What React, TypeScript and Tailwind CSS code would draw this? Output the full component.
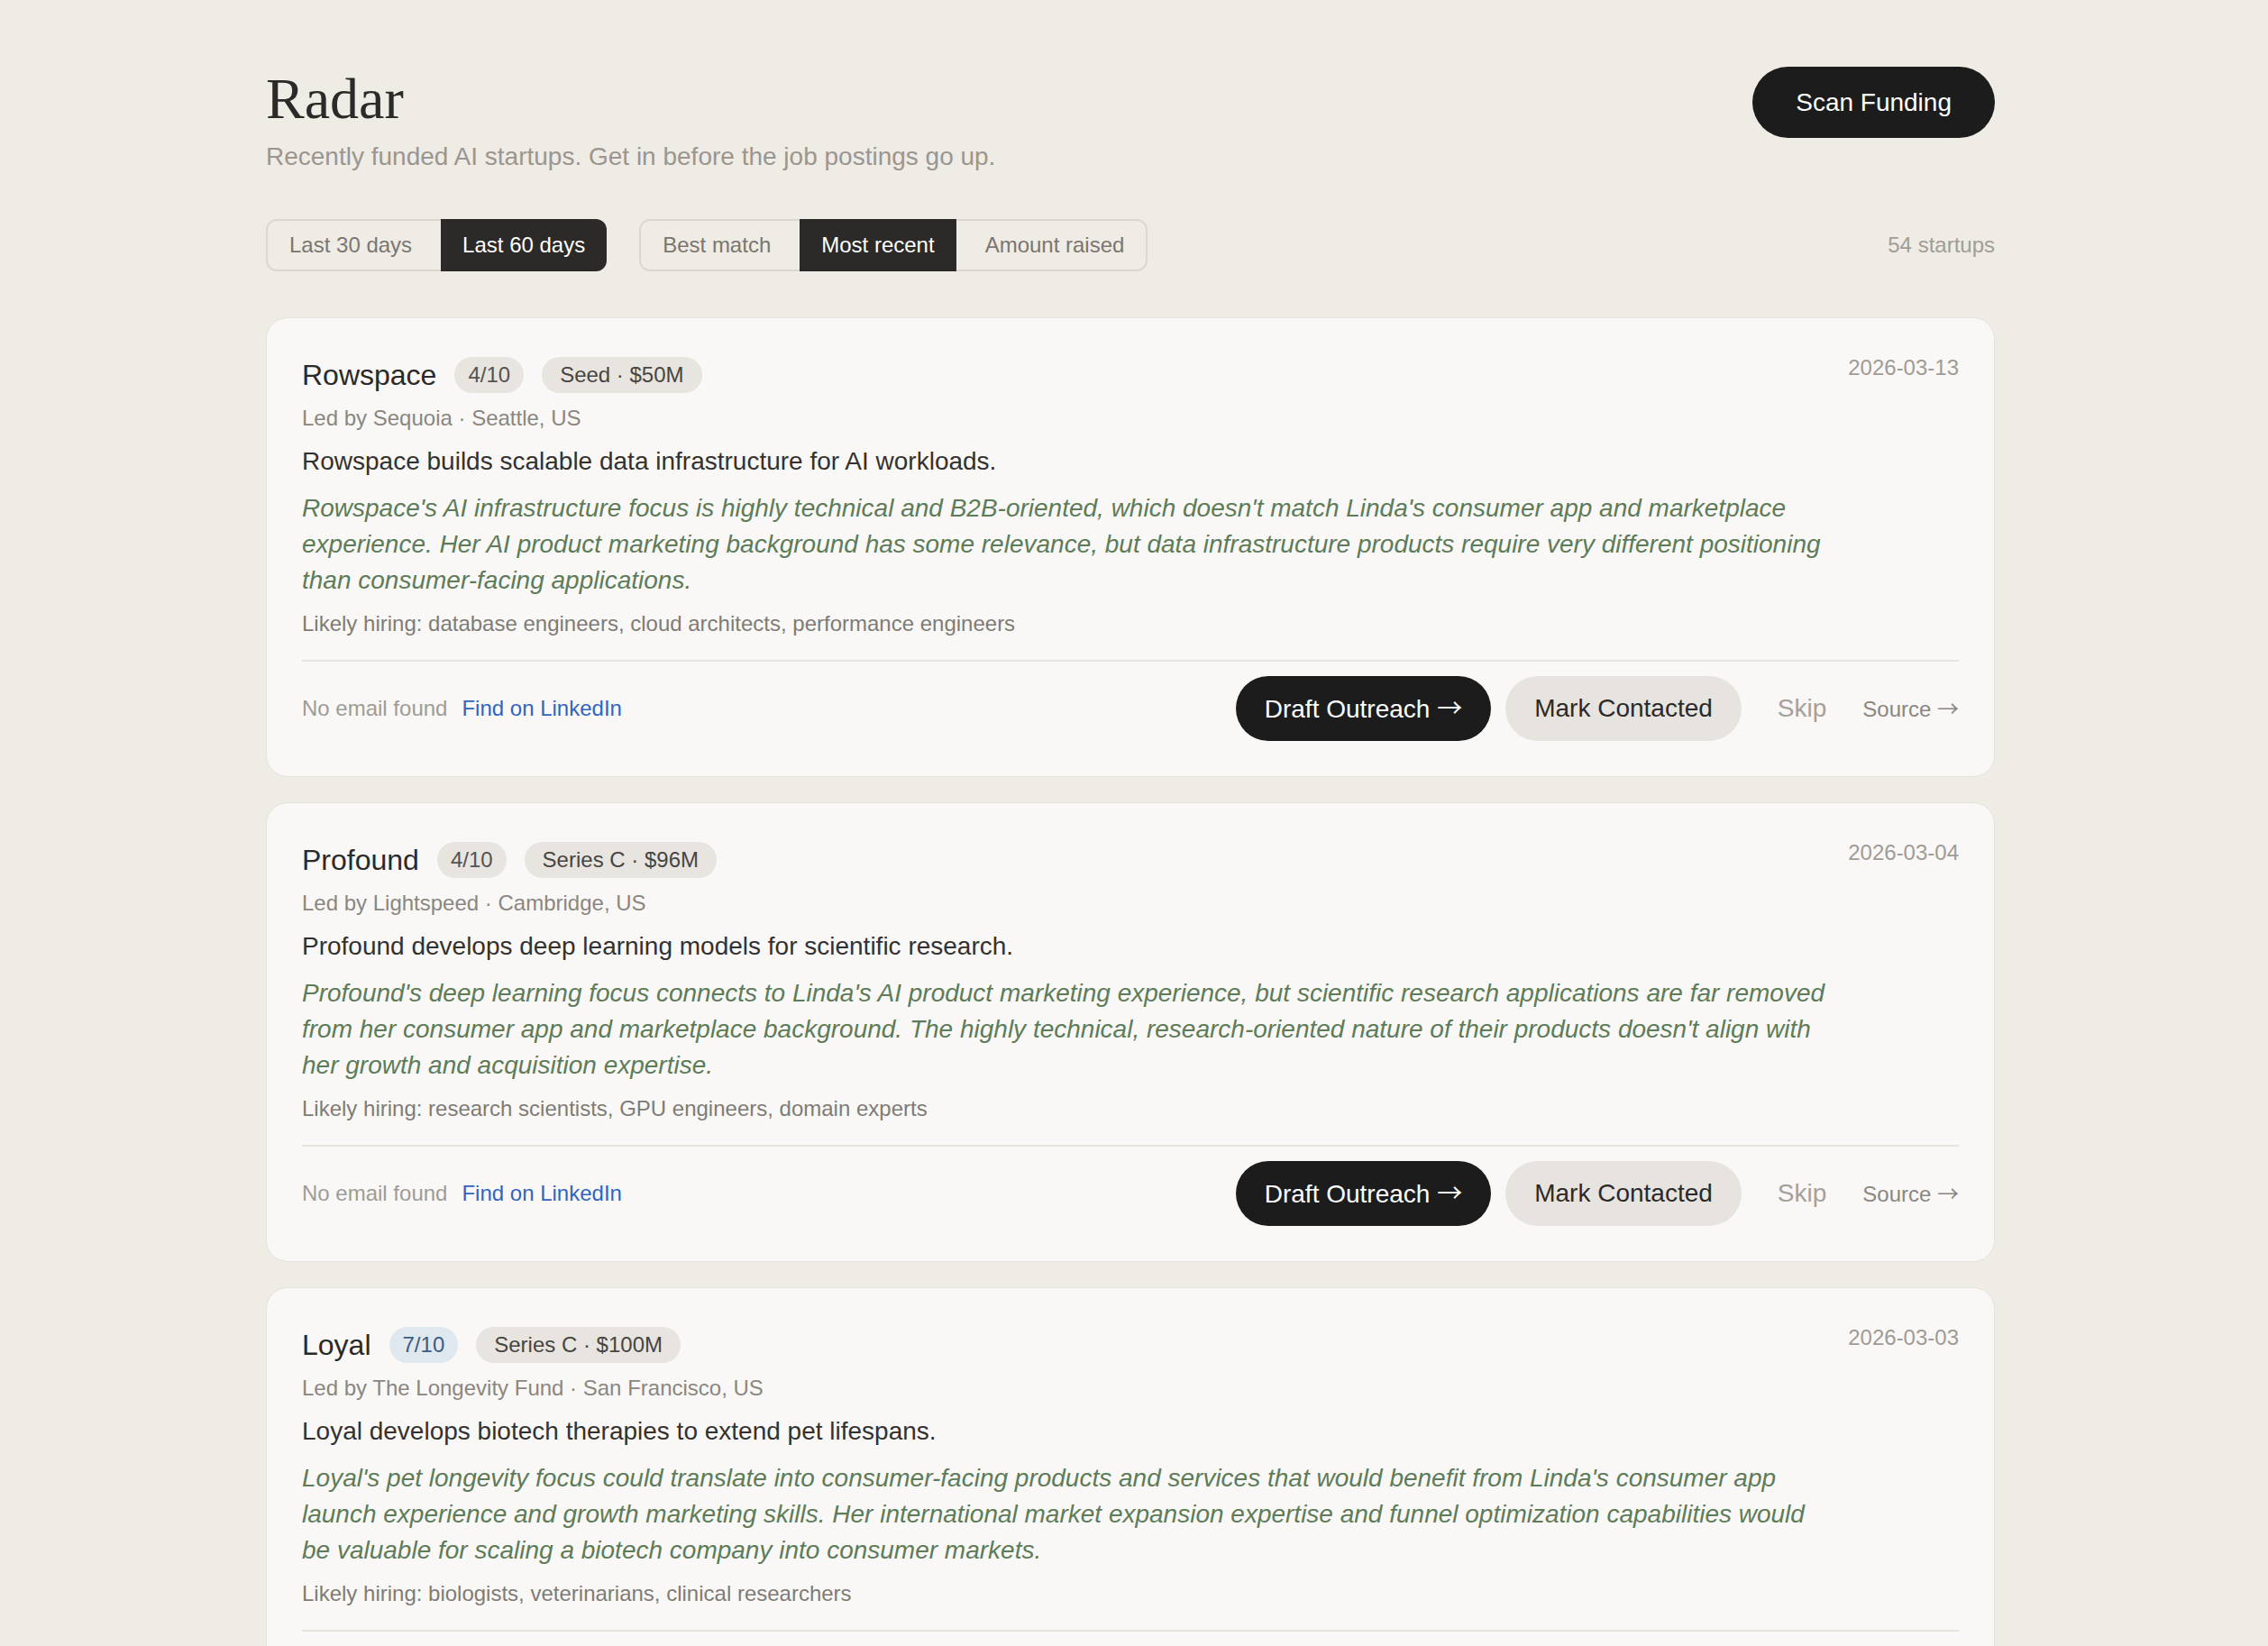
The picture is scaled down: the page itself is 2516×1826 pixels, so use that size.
import { useState } from "react";

type Startup = {
  name: string;
  score: number;
  round: string;
  date: string;
  meta: string;
  blurb: string;
  fit: string;
  hiring: string;
};

const STARTUPS: Startup[] = [
  {
    name: "Rowspace",
    score: 4,
    round: "Seed · $50M",
    date: "2026-03-13",
    meta: "Led by Sequoia · Seattle, US",
    blurb: "Rowspace builds scalable data infrastructure for AI workloads.",
    fit: "Rowspace's AI infrastructure focus is highly technical and B2B-oriented, which doesn't match Linda's consumer app and marketplace experience. Her AI product marketing background has some relevance, but data infrastructure products require very different positioning than consumer-facing applications.",
    hiring: "Likely hiring: database engineers, cloud architects, performance engineers",
  },
  {
    name: "Profound",
    score: 4,
    round: "Series C · $96M",
    date: "2026-03-04",
    meta: "Led by Lightspeed · Cambridge, US",
    blurb: "Profound develops deep learning models for scientific research.",
    fit: "Profound's deep learning focus connects to Linda's AI product marketing experience, but scientific research applications are far removed from her consumer app and marketplace background. The highly technical, research-oriented nature of their products doesn't align with her growth and acquisition expertise.",
    hiring: "Likely hiring: research scientists, GPU engineers, domain experts",
  },
  {
    name: "Loyal",
    score: 7,
    round: "Series C · $100M",
    date: "2026-03-03",
    meta: "Led by The Longevity Fund · San Francisco, US",
    blurb: "Loyal develops biotech therapies to extend pet lifespans.",
    fit: "Loyal's pet longevity focus could translate into consumer-facing products and services that would benefit from Linda's consumer app launch experience and growth marketing skills. Her international market expansion expertise and funnel optimization capabilities would be valuable for scaling a biotech company into consumer markets.",
    hiring: "Likely hiring: biologists, veterinarians, clinical researchers",
  },
];

// thin, long arrow glyph like the reference
const Arrow = () => <span className="font-['Noto_Sans_CJK_SC',sans-serif]">→</span>;

function Segmented({
  options,
  value,
  onChange,
}: {
  options: string[];
  value: string;
  onChange: (v: string) => void;
}) {
  return (
    <div className="flex gap-2 rounded-[12px] border-2 border-[#dcd8d1]">
      {options.map((opt, i) => {
        const active = opt === value;
        const last = i === options.length - 1;
        const first = i === 0;
        return (
          <button
            key={opt}
            onClick={() => onChange(opt)}
            className={`px-6 text-[24px] leading-[32px] ${
              active
                ? `-my-[2px] h-[58px] bg-[#2b2a28] text-white ${last ? "-mr-[2px] rounded-r-[12px]" : ""} ${first ? "-ml-[2px] rounded-l-[12px]" : ""}`
                : "h-[54px] text-[#7b7670]"
            }`}
          >
            {opt}
          </button>
        );
      })}
    </div>
  );
}

function StartupCard({ s }: { s: Startup }) {
  const good = s.score >= 6;
  return (
    <div className="rounded-[24px] border border-[#e6e2dc] bg-[#f9f8f6] p-[39px]">
      {/* title row */}
      <div className="flex items-start justify-between">
        <div className="flex h-[48px] items-center gap-5">
          <span className="text-[32px] leading-[48px] text-[#2a2a28]">{s.name}</span>
          <span
            className={`flex h-10 items-center rounded-full px-[15px] text-[24px] ${
              good ? "bg-[#dfe7ef] text-[#3b5d80]" : "bg-[#e8e4df] text-[#555350]"
            }`}
          >
            {s.score}/10
          </span>
          <span className="flex h-10 items-center rounded-full bg-[#e8e4df] px-5 text-[24px] text-[#474542]">
            {s.round}
          </span>
        </div>
        <span className="text-[24px] leading-[32px] text-[#a09b95]">{s.date}</span>
      </div>

      <div className="mt-2 text-[24px] leading-[32px] text-[#8b8680]">{s.meta}</div>
      <p className="mt-3 text-[28px] leading-[40px] text-[#333230]">{s.blurb}</p>
      <p className="mt-3 max-w-[1705px] text-[28px] italic leading-[40px] text-[#5e7c59]">{s.fit}</p>
      <div className="mt-3 text-[24px] leading-[32px] text-[#807b75]">{s.hiring}</div>

      {/* actions */}
      <div className="mt-6 flex items-center justify-between border-t-2 border-[#e7e3dd] pt-4">
        <div className="flex items-center gap-4 text-[24px] leading-[32px]">
          <span className="text-[#a09b95]">No email found</span>
          <a className="text-[#2f64c3]">Find on LinkedIn</a>
        </div>
        <div className="flex items-center gap-4">
          <button className="h-[72px] rounded-full bg-[#1c1c1c] px-8 text-[28px] text-white">
            Draft Outreach <Arrow />
          </button>
          <button className="h-[72px] rounded-full bg-[#e7e4df] px-8 text-[28px] text-[#2b2a28]">
            Mark Contacted
          </button>
          <button className="px-6 text-[28px] leading-[40px] text-[#a5a09a]">Skip</button>
          <a className="text-[24px] leading-[32px] text-[#8b8680]">
            Source <Arrow />
          </a>
        </div>
      </div>
    </div>
  );
}

export default function App() {
  const [range, setRange] = useState("Last 60 days");
  const [sort, setSort] = useState("Most recent");

  return (
    <div className="min-h-screen bg-[#efebe5] font-['Liberation_Sans',Arial,sans-serif]">
      <div className="ml-[295px] w-[1918px] pt-[72px] pb-16">
        {/* ── Header ── */}
        <div className="flex items-start justify-between">
          <div>
            <h1 className="font-['Liberation_Serif',Georgia,serif] text-[64px] leading-[1.2] text-[#2a2a28]">
              Radar
            </h1>
            <p className="mt-[5px] text-[28px] leading-[40px] text-[#9b968f]">
              Recently funded AI startups. Get in before the job postings go up.
            </p>
          </div>
          <button className="mt-[2px] flex h-[79px] items-center rounded-full bg-[#1c1c1c] px-12 text-[28px] text-white">
            Scan Funding
          </button>
        </div>

        {/* ── Filters ── */}
        <div className="mt-[49px] flex items-center justify-between">
          <div className="flex gap-9">
            <Segmented options={["Last 30 days", "Last 60 days"]} value={range} onChange={setRange} />
            <Segmented
              options={["Best match", "Most recent", "Amount raised"]}
              value={sort}
              onChange={setSort}
            />
          </div>
          <span className="text-[24px] leading-[32px] text-[#a19c96]">54 startups</span>
        </div>

        {/* ── Cards ── */}
        <div className="mt-[51px] flex flex-col gap-[28px]">
          {STARTUPS.map(s => (
            <StartupCard key={s.name} s={s} />
          ))}
        </div>
      </div>
    </div>
  );
}
